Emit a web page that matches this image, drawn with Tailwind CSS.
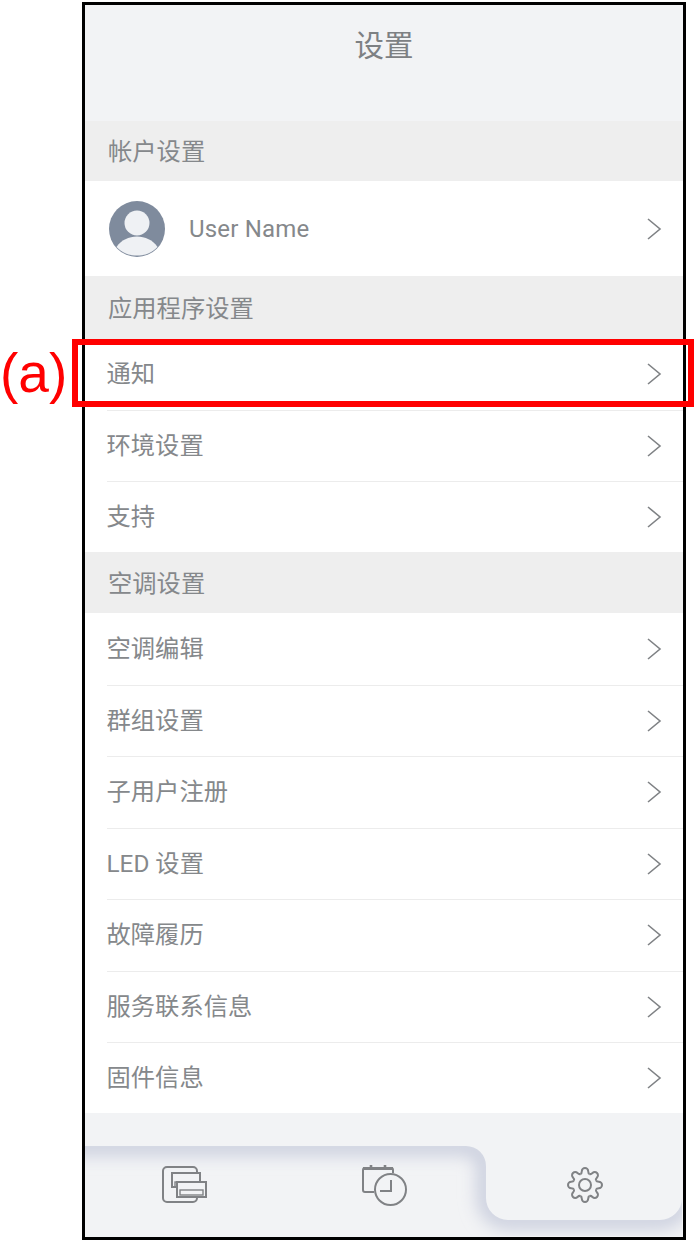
<!DOCTYPE html>
<html lang="zh">
<head>
<meta charset="utf-8">
<title>设置</title>
<script src="https://cdn.jsdelivr.net/npm/@tailwindcss/browser@4"></script>
</head>
<body class="bg-white">
<svg class="hidden">
  <symbol id="chevron" viewBox="0 0 16 24"><path d="M2 2l12 10L2 22" fill="none" stroke="#7f8285" stroke-width="1.6"/></symbol>
</svg>
<div class="relative w-[695px] h-[1243px] pt-[2px] pl-[82px] font-['Roboto','Noto_Sans_CJK_SC',sans-serif] text-[#85888b]">

  <!-- phone frame -->
  <div class="w-[604px] h-[1238px] border-[3px] border-black bg-[#f2f3f5] flex flex-col overflow-hidden">
    <header class="h-[116px] flex justify-center pt-[22px] text-[29.5px] leading-[38px] text-[#7d8083]">设置</header>

    <div class="h-[60px] bg-[#eeeeee] flex items-center pt-[2px] pl-[23px] text-[24.3px]">帐户设置</div>
    <div class="h-[95px] bg-white flex items-center pt-[1px] pl-[23px] pr-[21px]">
      <svg class="w-[58px] h-[58px]" viewBox="0 0 58 58">
        <circle cx="29" cy="29" r="28" fill="#7f8b9d"/>
        <circle cx="29" cy="23" r="12.5" fill="#eff1f4"/>
        <path d="M8.5 47 C13 40 21 36.5 29 36.5 C37 36.5 45 40 49.5 47 C44 53 37 55.5 29 55.5 C21 55.5 14 53 8.5 47Z" fill="#eff1f4"/>
      </svg>
      <span class="ml-[23px] text-[24px] tracking-[0.2px]">User Name</span>
      <svg class="ml-auto w-[16px] h-[24px]"><use href="#chevron"/></svg>
    </div>

    <div class="h-[63px] bg-[#eeeeee] flex items-center pt-[3px] pl-[23px] text-[24.3px]">应用程序设置</div>
    <div class="bg-white">
      <div class="h-[70.5px] flex items-center pl-[21.5px] pr-[21px] text-[24.3px]"><div class="flex-1">通知</div><svg class="w-[16px] h-[24px]"><use href="#chevron"/></svg></div>
      <div class="h-[71.5px] flex items-center ml-[21.5px] pr-[21px] text-[24.3px] border-t border-[#ececec]"><div class="flex-1">环境设置</div><svg class="w-[16px] h-[24px]"><use href="#chevron"/></svg></div>
      <div class="h-[71px] flex items-center ml-[21.5px] pr-[21px] text-[24.3px] border-t border-[#ececec]"><div class="flex-1">支持</div><svg class="w-[16px] h-[24px]"><use href="#chevron"/></svg></div>
    </div>

    <div class="h-[61px] bg-[#eeeeee] flex items-center pt-[3px] pl-[23px] text-[24.3px]">空调设置</div>
    <div class="bg-white">
      <div class="h-[71.5px] flex items-center pl-[21.5px] pr-[21px] text-[24.3px]"><div class="flex-1">空调编辑</div><svg class="w-[16px] h-[24px]"><use href="#chevron"/></svg></div>
      <div class="h-[71.5px] flex items-center ml-[21.5px] pr-[21px] text-[24.3px] border-t border-[#ececec]"><div class="flex-1">群组设置</div><svg class="w-[16px] h-[24px]"><use href="#chevron"/></svg></div>
      <div class="h-[71.5px] flex items-center ml-[21.5px] pr-[21px] text-[24.3px] border-t border-[#ececec]"><div class="flex-1">子用户注册</div><svg class="w-[16px] h-[24px]"><use href="#chevron"/></svg></div>
      <div class="h-[71.5px] flex items-center ml-[21.5px] pr-[21px] text-[24.3px] border-t border-[#ececec]"><div class="flex-1">LED 设置</div><svg class="w-[16px] h-[24px]"><use href="#chevron"/></svg></div>
      <div class="h-[71.5px] flex items-center ml-[21.5px] pr-[21px] text-[24.3px] border-t border-[#ececec]"><div class="flex-1">故障履历</div><svg class="w-[16px] h-[24px]"><use href="#chevron"/></svg></div>
      <div class="h-[71.5px] flex items-center ml-[21.5px] pr-[21px] text-[24.3px] border-t border-[#ececec]"><div class="flex-1">服务联系信息</div><svg class="w-[16px] h-[24px]"><use href="#chevron"/></svg></div>
      <div class="h-[71px] flex items-center ml-[21.5px] pr-[21px] text-[24.3px] border-t border-[#ececec]"><div class="flex-1">固件信息</div><svg class="w-[16px] h-[24px]"><use href="#chevron"/></svg></div>
    </div>

    <!-- bottom tab bar, the soft edge is a blurred stroke clipped to the shaded side -->
    <nav class="relative flex-1 pt-[33px] flex items-start">
      <svg class="absolute left-0 top-[33px] w-[597px] h-[90px]" viewBox="0 0 597 90">
        <defs>
          <filter id="soft" filterUnits="userSpaceOnUse" x="-60" y="-60" width="720" height="210"><feGaussianBlur stdDeviation="9"/></filter>
          <clipPath id="under"><path d="M0 0H381A20 20 0 0 1 401 20V52A22 22 0 0 0 423 74H575A22 22 0 0 0 597 52V90H0Z"/></clipPath>
        </defs>
        <g clip-path="url(#under)">
          <path d="M-30 0H381A20 20 0 0 1 401 20V52A22 22 0 0 0 423 74H575A22 22 0 0 0 597 52" fill="none" stroke="#c4c9da" stroke-width="16" filter="url(#soft)"/>
        </g>
      </svg>
      <div class="relative w-[200px] pt-[18px] flex justify-center">
        <svg class="w-[50px] h-[42px]" viewBox="0 0 50 42" fill="none" stroke="#808285" stroke-width="2">
          <path d="M37 9V7a4 4 0 0 0-4-4H7a4 4 0 0 0-4 4v27a4 4 0 0 0 4 4h26a4 4 0 0 0 4-4v-1"/>
          <rect x="12" y="9" width="28" height="14"/>
          <rect x="15" y="18" width="22" height="5" stroke-width="1.4"/>
          <rect x="17" y="18" width="29" height="15" fill="#f2f3f5"/>
          <rect x="20" y="26" width="23" height="5" stroke-width="1.4"/>
        </svg>
      </div>
      <div class="relative w-[200px] pt-[16px] flex justify-center">
        <svg class="w-[50px] h-[45px]" viewBox="0 0 50 45" fill="none" stroke="#808285" stroke-width="2">
          <path d="M14 30H5a2 2 0 0 1-2-2V8a2 2 0 0 1 2-2h26a2 2 0 0 1 2 2v3"/>
          <path d="M3 6.5h30" stroke-width="3"/>
          <path d="M11 3v4M25 3v4" stroke-width="2.6"/>
          <circle cx="30.5" cy="27.5" r="15.5" fill="#f2f3f5"/>
          <path d="M31 18v11H20"/>
        </svg>
      </div>
      <div class="relative w-[197px] pl-[3px] pt-[19px] flex justify-center">
        <svg class="w-[40px] h-[40px]" viewBox="-20 -20 40 40" fill="none" stroke="#808285" stroke-width="2">
          <defs><path id="tooth" d="M-4.6 -11Q-3.2 -11.6 -3.2 -13.8A3.2 3.2 0 0 1 3.2 -13.8Q3.2 -11.6 4.6 -11"/></defs>
          <circle r="6"/>
          <use href="#tooth"/>
          <use href="#tooth" transform="rotate(45)"/>
          <use href="#tooth" transform="rotate(90)"/>
          <use href="#tooth" transform="rotate(135)"/>
          <use href="#tooth" transform="rotate(180)"/>
          <use href="#tooth" transform="rotate(225)"/>
          <use href="#tooth" transform="rotate(270)"/>
          <use href="#tooth" transform="rotate(315)"/>
        </svg>
      </div>
    </nav>
  </div>

  <!-- annotation over the screenshot -->
  <div class="absolute left-[72px] top-[339px] w-[622px] h-[68px] border-[6px] border-[#ff0000]"></div>
  <div class="absolute left-[0px] top-[341px] text-[55px] leading-[64px] text-[#ff0000] font-['Liberation_Sans',sans-serif]">(a)</div>
</div>
</body>
</html>
